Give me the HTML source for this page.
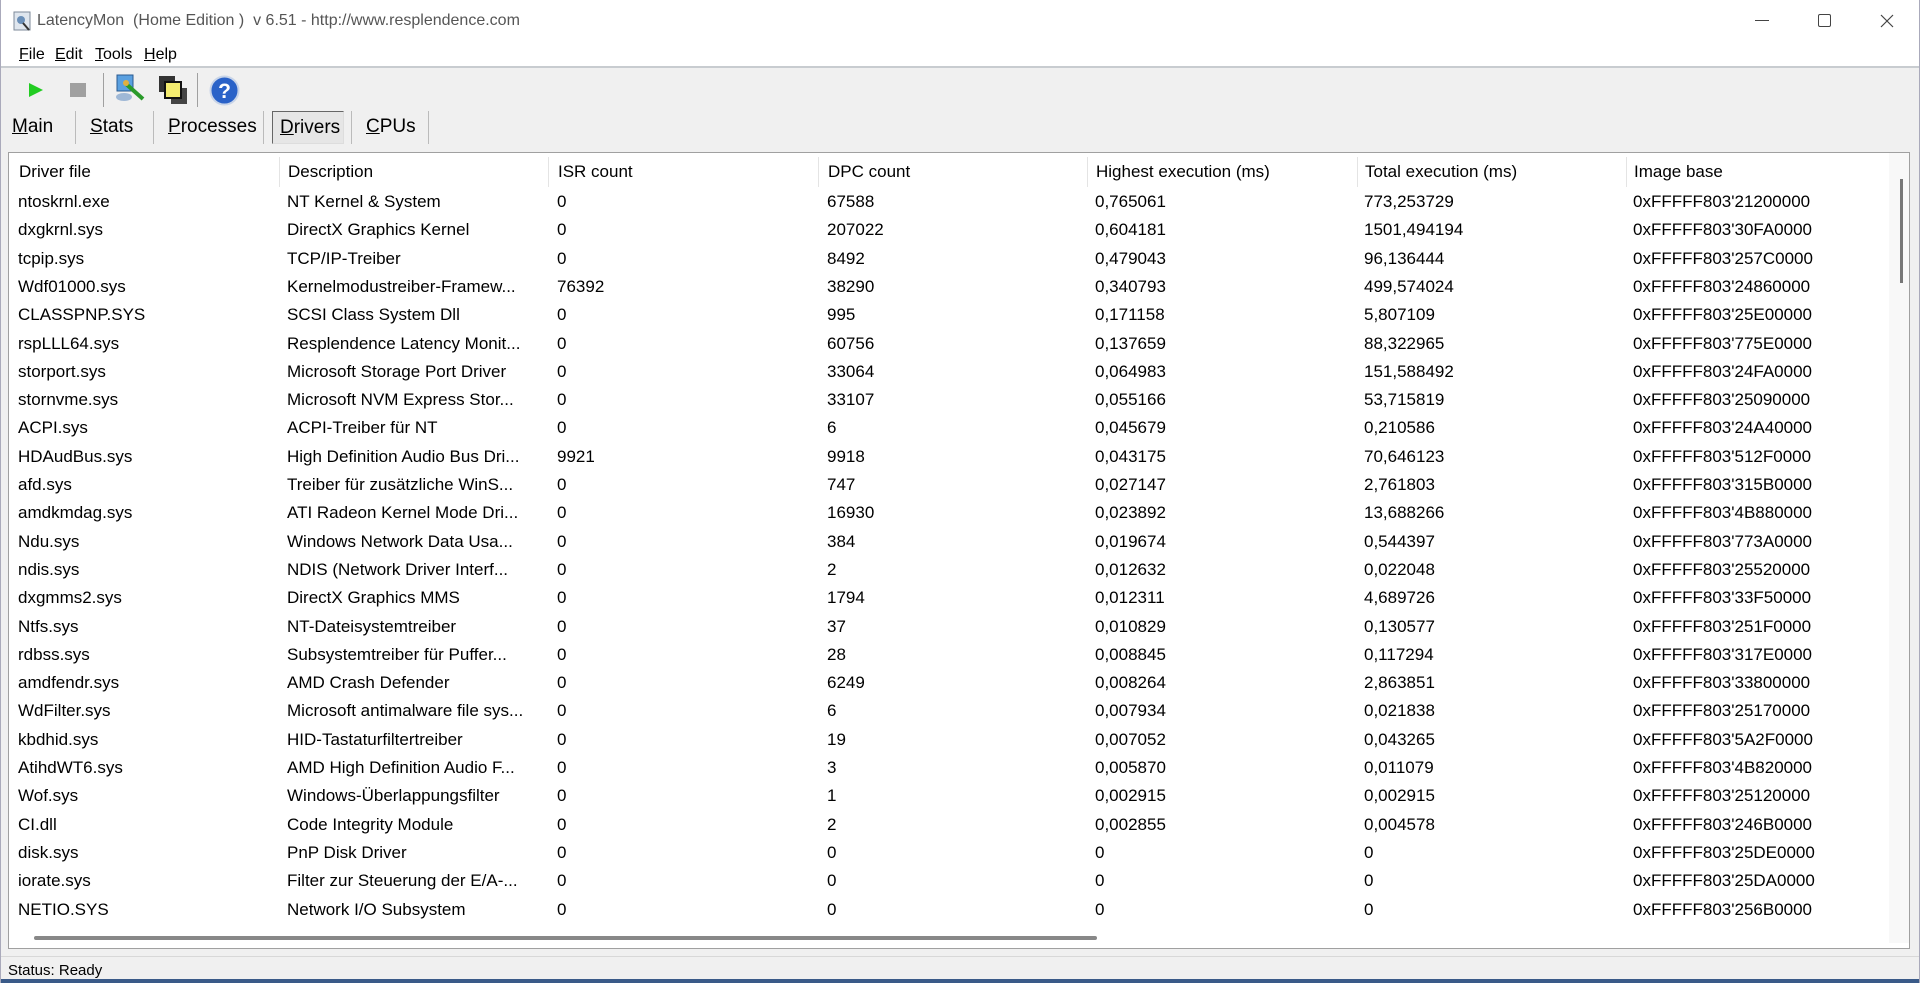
<!DOCTYPE html>
<html><head><meta charset="utf-8"><style>
*{margin:0;padding:0;box-sizing:border-box}
body{width:1920px;height:983px;overflow:hidden;background:#f0f0f0;font-family:"Liberation Sans",sans-serif;color:#000;position:relative}
.abs{position:absolute}
#title{left:0;top:0;width:1920px;height:68px;background:#fff;border-bottom:2px solid #c8ccd0}
.vs{position:absolute;width:1px;background:#a0a0a0}
.hdr span,.row span{position:absolute;white-space:nowrap}
.row{position:absolute;left:0;height:28px;width:1890px}
.row span{font-size:17px;top:4px}.hdr span{top:1px}
</style></head><body>
<div id="title" class="abs"></div>
<svg class="abs" style="left:13px;top:11px" width="20" height="22" viewBox="0 0 20 22"><rect x="1" y="1" width="16" height="18" fill="#dfe6ee" stroke="#7d8a99"/><circle cx="8" cy="9" r="4" fill="#6a8fb8"/><path d="M10 12 L16 19" stroke="#333" stroke-width="2"/></svg>
<div class="abs" style="left:37px;top:12px;font-size:16px;color:#555;white-space:pre">LatencyMon  (Home Edition )  v 6.51 - http://www.resplendence.com</div>
<div class="abs" style="left:1755px;top:20px;width:14px;height:1px;background:#444"></div>
<div class="abs" style="left:1818px;top:14px;width:13px;height:13px;border:1px solid #444;border-radius:2px"></div>
<svg class="abs" style="left:1880px;top:14px" width="14" height="14"><path d="M1 1L13 13M13 1L1 13" stroke="#444" stroke-width="1.2"/></svg>
<div class="abs" style="left:19px;top:46px;font-size:16px"><u>F</u>ile</div>
<div class="abs" style="left:55px;top:46px;font-size:16px"><u>E</u>dit</div>
<div class="abs" style="left:95px;top:46px;font-size:16px"><u>T</u>ools</div>
<div class="abs" style="left:144px;top:46px;font-size:16px"><u>H</u>elp</div>
<svg class="abs" style="left:28px;top:82px" width="16" height="16"><path d="M1 1L15 8L1 15Z" fill="#22cc22"/></svg>
<div class="abs" style="left:70px;top:83px;width:16px;height:14px;background:#a0a0a0"></div>
<div class="vs" style="left:103px;top:73px;height:34px"></div>
<svg class="abs" style="left:113px;top:73px" width="34" height="32"><rect x="4" y="2" width="16" height="16" fill="#5aa0e0" stroke="#2a5a90"/><ellipse cx="11" cy="24" rx="8" ry="4" fill="#9fb8d6"/><path d="M12 10 L30 26" stroke="#2a9a2a" stroke-width="4"/><circle cx="13" cy="10" r="3" fill="#e0b040"/></svg>
<svg class="abs" style="left:157px;top:74px" width="32" height="32"><rect x="2" y="2" width="16" height="16" fill="#333"/><rect x="14" y="14" width="16" height="16" fill="#444"/><rect x="8" y="8" width="16" height="16" fill="#f4ec70" stroke="#111" stroke-width="2"/></svg>
<div class="vs" style="left:197px;top:73px;height:34px"></div>
<svg class="abs" style="left:209px;top:75px" width="31" height="31"><circle cx="15.5" cy="15.5" r="14" fill="#2a62c8" stroke="#c8d4e8" stroke-width="2"/><text x="15.5" y="23" text-anchor="middle" font-family="Liberation Sans" font-weight="bold" font-size="21" fill="#fff">?</text></svg>
<div class="abs" style="left:272px;top:111px;width:72px;height:33px;border:1px solid #666;border-right-color:#ddd;border-bottom-color:#ddd;background:#e6e6e6"></div>
<div class="abs" style="left:12px;top:116px;font-size:19px"><u>M</u>ain</div>
<div class="abs" style="left:90px;top:116px;font-size:19px"><u>S</u>tats</div>
<div class="abs" style="left:168px;top:116px;font-size:19px"><u>P</u>rocesses</div>
<div class="abs" style="left:280px;top:117px;font-size:19px"><u>D</u>rivers</div>
<div class="abs" style="left:366px;top:116px;font-size:19px"><u>C</u>PUs</div>
<div class="vs" style="left:75px;top:111px;height:33px;background:#bbb"></div>
<div class="vs" style="left:153px;top:111px;height:33px;background:#bbb"></div>
<div class="vs" style="left:263px;top:111px;height:33px;background:#bbb"></div>
<div class="vs" style="left:351px;top:111px;height:33px;background:#bbb"></div>
<div class="vs" style="left:428px;top:111px;height:33px;background:#bbb"></div>
<div class="abs" style="left:8px;top:152px;width:1902px;height:797px;background:#fff;border:1px solid #a0a0a0;overflow:hidden;font-size:17px">
<div style="position:absolute;left:1880px;top:0;width:21px;height:790px;background:#f8f8f8"></div>
<div style="position:absolute;left:1891px;top:26px;width:3px;height:104px;background:#777"></div>
<div style="position:absolute;left:25px;top:783px;width:1063px;height:4px;background:#888;border-radius:2px"></div>
<div class="hdr" style="position:absolute;left:0;top:8px;width:1880px;height:28px">
<span style="left:10px">Driver file</span><span style="left:279px">Description</span><span style="left:549px">ISR count</span><span style="left:819px">DPC count</span><span style="left:1087px">Highest execution (ms)</span><span style="left:1356px">Total execution (ms)</span><span style="left:1625px">Image base</span>
</div>
<div style="position:absolute;left:270px;top:4px;width:1px;height:30px;background:#e4e4e4"></div>
<div style="position:absolute;left:539px;top:4px;width:1px;height:30px;background:#e4e4e4"></div>
<div style="position:absolute;left:809px;top:4px;width:1px;height:30px;background:#e4e4e4"></div>
<div style="position:absolute;left:1078px;top:4px;width:1px;height:30px;background:#e4e4e4"></div>
<div style="position:absolute;left:1348px;top:4px;width:1px;height:30px;background:#e4e4e4"></div>
<div style="position:absolute;left:1617px;top:4px;width:1px;height:30px;background:#e4e4e4"></div>
</div>
<div class="abs" style="left:0;top:956px;width:1920px;height:1px;background:#d8d8d8"></div>
<div class="abs" style="left:8px;top:962px;font-size:15px">Status: Ready</div>
<div class="abs" style="left:0;top:979px;width:1920px;height:4px;background:#3a5a88"></div>
<div class="abs" style="left:0;top:0;width:1px;height:983px;background:#aab"></div>
<div class="abs" style="left:1919px;top:0;width:1px;height:983px;background:#aab"></div>
<div style="position:absolute;left:8px;top:152px">
<div class="row" style="top:36px"><span style="left:10px">ntoskrnl.exe</span><span style="left:279px">NT Kernel &amp; System</span><span style="left:549px">0</span><span style="left:819px">67588</span><span style="left:1087px">0,765061</span><span style="left:1356px">773,253729</span><span style="left:1625px">0xFFFFF803'21200000</span></div>
<div class="row" style="top:64.3px"><span style="left:10px">dxgkrnl.sys</span><span style="left:279px">DirectX Graphics Kernel</span><span style="left:549px">0</span><span style="left:819px">207022</span><span style="left:1087px">0,604181</span><span style="left:1356px">1501,494194</span><span style="left:1625px">0xFFFFF803'30FA0000</span></div>
<div class="row" style="top:92.6px"><span style="left:10px">tcpip.sys</span><span style="left:279px">TCP/IP-Treiber</span><span style="left:549px">0</span><span style="left:819px">8492</span><span style="left:1087px">0,479043</span><span style="left:1356px">96,136444</span><span style="left:1625px">0xFFFFF803'257C0000</span></div>
<div class="row" style="top:120.9px"><span style="left:10px">Wdf01000.sys</span><span style="left:279px">Kernelmodustreiber-Framew...</span><span style="left:549px">76392</span><span style="left:819px">38290</span><span style="left:1087px">0,340793</span><span style="left:1356px">499,574024</span><span style="left:1625px">0xFFFFF803'24860000</span></div>
<div class="row" style="top:149.2px"><span style="left:10px">CLASSPNP.SYS</span><span style="left:279px">SCSI Class System Dll</span><span style="left:549px">0</span><span style="left:819px">995</span><span style="left:1087px">0,171158</span><span style="left:1356px">5,807109</span><span style="left:1625px">0xFFFFF803'25E00000</span></div>
<div class="row" style="top:177.5px"><span style="left:10px">rspLLL64.sys</span><span style="left:279px">Resplendence Latency Monit...</span><span style="left:549px">0</span><span style="left:819px">60756</span><span style="left:1087px">0,137659</span><span style="left:1356px">88,322965</span><span style="left:1625px">0xFFFFF803'775E0000</span></div>
<div class="row" style="top:205.8px"><span style="left:10px">storport.sys</span><span style="left:279px">Microsoft Storage Port Driver</span><span style="left:549px">0</span><span style="left:819px">33064</span><span style="left:1087px">0,064983</span><span style="left:1356px">151,588492</span><span style="left:1625px">0xFFFFF803'24FA0000</span></div>
<div class="row" style="top:234.1px"><span style="left:10px">stornvme.sys</span><span style="left:279px">Microsoft NVM Express Stor...</span><span style="left:549px">0</span><span style="left:819px">33107</span><span style="left:1087px">0,055166</span><span style="left:1356px">53,715819</span><span style="left:1625px">0xFFFFF803'25090000</span></div>
<div class="row" style="top:262.4px"><span style="left:10px">ACPI.sys</span><span style="left:279px">ACPI-Treiber für NT</span><span style="left:549px">0</span><span style="left:819px">6</span><span style="left:1087px">0,045679</span><span style="left:1356px">0,210586</span><span style="left:1625px">0xFFFFF803'24A40000</span></div>
<div class="row" style="top:290.7px"><span style="left:10px">HDAudBus.sys</span><span style="left:279px">High Definition Audio Bus Dri...</span><span style="left:549px">9921</span><span style="left:819px">9918</span><span style="left:1087px">0,043175</span><span style="left:1356px">70,646123</span><span style="left:1625px">0xFFFFF803'512F0000</span></div>
<div class="row" style="top:319px"><span style="left:10px">afd.sys</span><span style="left:279px">Treiber für zusätzliche WinS...</span><span style="left:549px">0</span><span style="left:819px">747</span><span style="left:1087px">0,027147</span><span style="left:1356px">2,761803</span><span style="left:1625px">0xFFFFF803'315B0000</span></div>
<div class="row" style="top:347.3px"><span style="left:10px">amdkmdag.sys</span><span style="left:279px">ATI Radeon Kernel Mode Dri...</span><span style="left:549px">0</span><span style="left:819px">16930</span><span style="left:1087px">0,023892</span><span style="left:1356px">13,688266</span><span style="left:1625px">0xFFFFF803'4B880000</span></div>
<div class="row" style="top:375.6px"><span style="left:10px">Ndu.sys</span><span style="left:279px">Windows Network Data Usa...</span><span style="left:549px">0</span><span style="left:819px">384</span><span style="left:1087px">0,019674</span><span style="left:1356px">0,544397</span><span style="left:1625px">0xFFFFF803'773A0000</span></div>
<div class="row" style="top:403.9px"><span style="left:10px">ndis.sys</span><span style="left:279px">NDIS (Network Driver Interf...</span><span style="left:549px">0</span><span style="left:819px">2</span><span style="left:1087px">0,012632</span><span style="left:1356px">0,022048</span><span style="left:1625px">0xFFFFF803'25520000</span></div>
<div class="row" style="top:432.2px"><span style="left:10px">dxgmms2.sys</span><span style="left:279px">DirectX Graphics MMS</span><span style="left:549px">0</span><span style="left:819px">1794</span><span style="left:1087px">0,012311</span><span style="left:1356px">4,689726</span><span style="left:1625px">0xFFFFF803'33F50000</span></div>
<div class="row" style="top:460.5px"><span style="left:10px">Ntfs.sys</span><span style="left:279px">NT-Dateisystemtreiber</span><span style="left:549px">0</span><span style="left:819px">37</span><span style="left:1087px">0,010829</span><span style="left:1356px">0,130577</span><span style="left:1625px">0xFFFFF803'251F0000</span></div>
<div class="row" style="top:488.8px"><span style="left:10px">rdbss.sys</span><span style="left:279px">Subsystemtreiber für Puffer...</span><span style="left:549px">0</span><span style="left:819px">28</span><span style="left:1087px">0,008845</span><span style="left:1356px">0,117294</span><span style="left:1625px">0xFFFFF803'317E0000</span></div>
<div class="row" style="top:517.1px"><span style="left:10px">amdfendr.sys</span><span style="left:279px">AMD Crash Defender</span><span style="left:549px">0</span><span style="left:819px">6249</span><span style="left:1087px">0,008264</span><span style="left:1356px">2,863851</span><span style="left:1625px">0xFFFFF803'33800000</span></div>
<div class="row" style="top:545.4px"><span style="left:10px">WdFilter.sys</span><span style="left:279px">Microsoft antimalware file sys...</span><span style="left:549px">0</span><span style="left:819px">6</span><span style="left:1087px">0,007934</span><span style="left:1356px">0,021838</span><span style="left:1625px">0xFFFFF803'25170000</span></div>
<div class="row" style="top:573.7px"><span style="left:10px">kbdhid.sys</span><span style="left:279px">HID-Tastaturfiltertreiber</span><span style="left:549px">0</span><span style="left:819px">19</span><span style="left:1087px">0,007052</span><span style="left:1356px">0,043265</span><span style="left:1625px">0xFFFFF803'5A2F0000</span></div>
<div class="row" style="top:602px"><span style="left:10px">AtihdWT6.sys</span><span style="left:279px">AMD High Definition Audio F...</span><span style="left:549px">0</span><span style="left:819px">3</span><span style="left:1087px">0,005870</span><span style="left:1356px">0,011079</span><span style="left:1625px">0xFFFFF803'4B820000</span></div>
<div class="row" style="top:630.3px"><span style="left:10px">Wof.sys</span><span style="left:279px">Windows-Überlappungsfilter</span><span style="left:549px">0</span><span style="left:819px">1</span><span style="left:1087px">0,002915</span><span style="left:1356px">0,002915</span><span style="left:1625px">0xFFFFF803'25120000</span></div>
<div class="row" style="top:658.6px"><span style="left:10px">CI.dll</span><span style="left:279px">Code Integrity Module</span><span style="left:549px">0</span><span style="left:819px">2</span><span style="left:1087px">0,002855</span><span style="left:1356px">0,004578</span><span style="left:1625px">0xFFFFF803'246B0000</span></div>
<div class="row" style="top:686.9px"><span style="left:10px">disk.sys</span><span style="left:279px">PnP Disk Driver</span><span style="left:549px">0</span><span style="left:819px">0</span><span style="left:1087px">0</span><span style="left:1356px">0</span><span style="left:1625px">0xFFFFF803'25DE0000</span></div>
<div class="row" style="top:715.2px"><span style="left:10px">iorate.sys</span><span style="left:279px">Filter zur Steuerung der E/A-...</span><span style="left:549px">0</span><span style="left:819px">0</span><span style="left:1087px">0</span><span style="left:1356px">0</span><span style="left:1625px">0xFFFFF803'25DA0000</span></div>
<div class="row" style="top:743.5px"><span style="left:10px">NETIO.SYS</span><span style="left:279px">Network I/O Subsystem</span><span style="left:549px">0</span><span style="left:819px">0</span><span style="left:1087px">0</span><span style="left:1356px">0</span><span style="left:1625px">0xFFFFF803'256B0000</span></div>
</div>
</body></html>
